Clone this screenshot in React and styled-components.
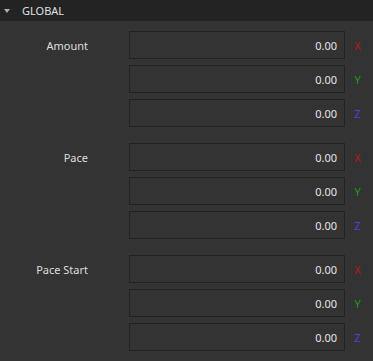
import React from "react";
import styled, { createGlobalStyle } from "styled-components";

const Global = createGlobalStyle`
  html, body { margin: 0; padding: 0; background: #333333; }
  body { font-family: "Noto Sans", "DejaVu Sans", sans-serif; font-size: 11px; color: #dcdcdc; }
`;

const Panel = styled.div`
  width: 373px;
  height: 361px;
  background: #333333;
  overflow: hidden;
`;

const Header = styled.div`
  height: 21px;
  background: #232323;
  display: flex;
  align-items: center;
  padding-left: 4px;
  gap: 11px;
  color: #e0e0e0;
  font-size: 11px;
`;

const Arrow = styled.span`
  width: 0;
  height: 0;
  border-left: 3.5px solid transparent;
  border-right: 3.5px solid transparent;
  border-top: 4px solid #b0b0b0;
`;

const Title = styled.span`
  padding-left: 1px;
`;

const Body = styled.div`
  display: flex;
  flex-direction: column;
  gap: 16px;
  padding-top: 10px;
`;

const Group = styled.div`
  display: grid;
  grid-template-columns: 129px 216px 28px;
  grid-template-rows: repeat(3, 28px);
  row-gap: 6px;
`;

const Label = styled.div`
  grid-column: 1;
  grid-row: 1;
  display: flex;
  align-items: center;
  justify-content: flex-end;
  padding-right: 41px;
  color: #dedede;
`;

const Field = styled.div`
  grid-column: 2;
  grid-row: ${(p) => p.$row};
  box-sizing: border-box;
  border: 1px solid #222222;
  background: #333333;
  display: flex;
  align-items: center;
  justify-content: flex-end;
  padding-right: 7px;
  color: #e4e4e4;
`;

const Axis = styled.div`
  grid-column: 3;
  grid-row: ${(p) => p.$row};
  display: flex;
  align-items: center;
  justify-content: center;
  padding-right: 3px;
  color: ${(p) => p.$color};
`;

const axes = [
  { name: "X", color: "#b01c1c" },
  { name: "Y", color: "#1f9a1f" },
  { name: "Z", color: "#4848c8" },
];

const groups = ["Amount", "Pace", "Pace Start"];

export default function App() {
  return (
    <>
      <Global />
      <Panel>
        <Header>
          <Arrow />
          <Title>GLOBAL</Title>
        </Header>
        <Body>
          {groups.map((g) => (
            <Group key={g}>
              <Label>{g}</Label>
              {axes.map((a, i) => (
                <React.Fragment key={a.name}>
                  <Field $row={i + 1}>0.00</Field>
                  <Axis $row={i + 1} $color={a.color}>
                    {a.name}
                  </Axis>
                </React.Fragment>
              ))}
            </Group>
          ))}
        </Body>
      </Panel>
    </>
  );
}
